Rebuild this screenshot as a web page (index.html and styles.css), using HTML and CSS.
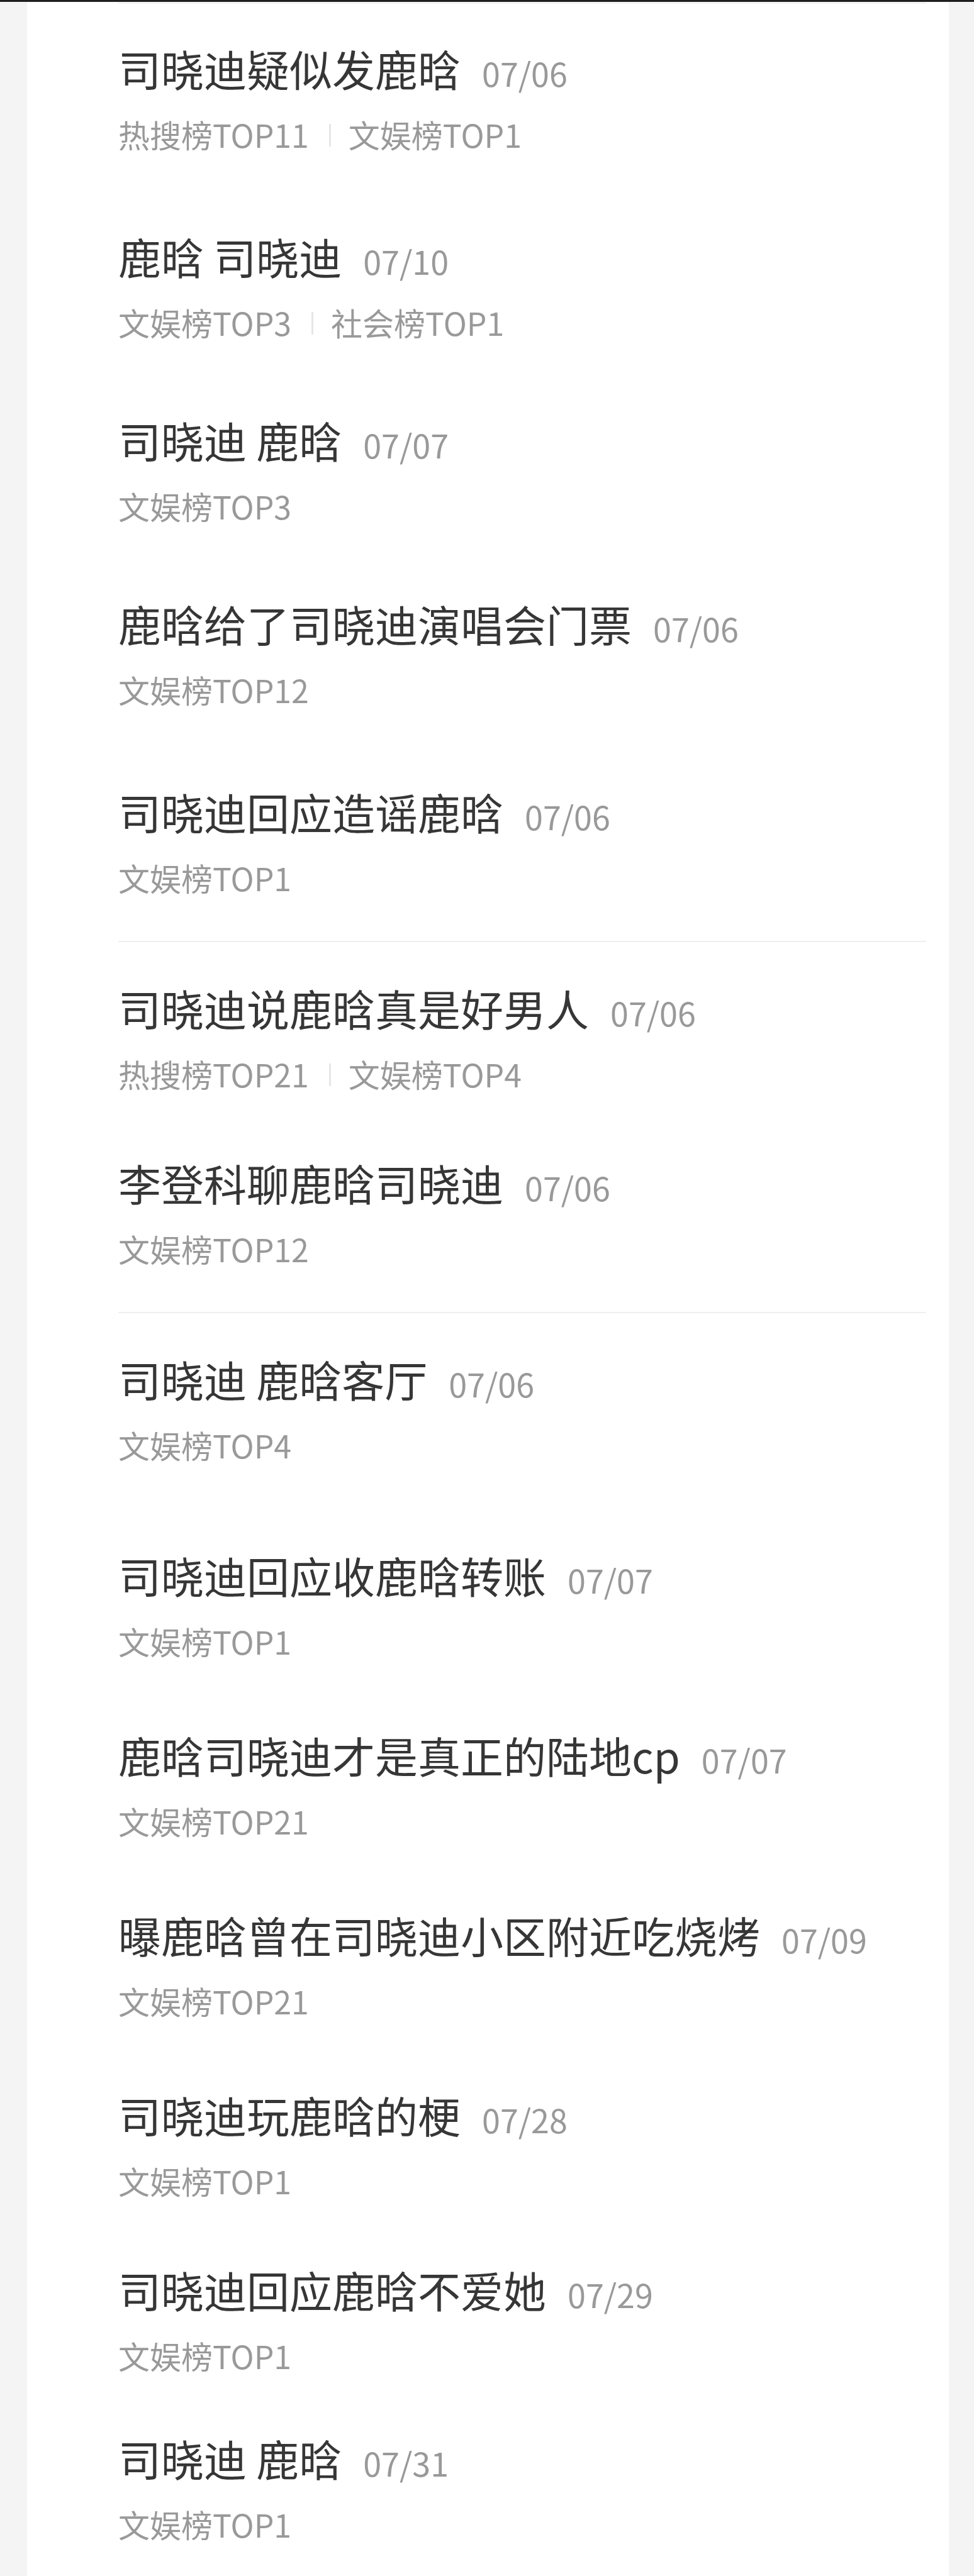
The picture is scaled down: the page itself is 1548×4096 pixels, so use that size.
FILE: index.html
```html
<!DOCTYPE html>
<html lang="zh-CN">
	<head>
		<meta charset="utf-8" />
		<title>热搜记录</title>
		<link rel="stylesheet" href="styles.css">
	</head>
	<body>
		<div class="topBar"></div>
		<div id="divList">
			<div class="rule first"></div>
			<div class="item roomy">
				<div class="title">司晓迪疑似发鹿晗<span class="date">07/06</span></div>
				<div class="tags"><span>热搜榜TOP11</span><i class="sep"></i><span>文娱榜TOP1</span></div>
			</div>
			<div class="item">
				<div class="title">鹿晗 司晓迪<span class="date">07/10</span></div>
				<div class="tags"><span>文娱榜TOP3</span><i class="sep"></i><span>社会榜TOP1</span></div>
			</div>
			<div class="item">
				<div class="title">司晓迪 鹿晗<span class="date">07/07</span></div>
				<div class="tags"><span>文娱榜TOP3</span></div>
			</div>
			<div class="item roomy">
				<div class="title">鹿晗给了司晓迪演唱会门票<span class="date">07/06</span></div>
				<div class="tags"><span>文娱榜TOP12</span></div>
			</div>
			<div class="item">
				<div class="title">司晓迪回应造谣鹿晗<span class="date">07/06</span></div>
				<div class="tags"><span>文娱榜TOP1</span></div>
			</div>
			<div class="rule"></div>
			<div class="item close">
				<div class="title">司晓迪说鹿晗真是好男人<span class="date">07/06</span></div>
				<div class="tags"><span>热搜榜TOP21</span><i class="sep"></i><span>文娱榜TOP4</span></div>
			</div>
			<div class="item">
				<div class="title">李登科聊鹿晗司晓迪<span class="date">07/06</span></div>
				<div class="tags"><span>文娱榜TOP12</span></div>
			</div>
			<div class="rule"></div>
			<div class="item airy">
				<div class="title">司晓迪 鹿晗客厅<span class="date">07/06</span></div>
				<div class="tags"><span>文娱榜TOP4</span></div>
			</div>
			<div class="item snug">
				<div class="title">司晓迪回应收鹿晗转账<span class="date">07/07</span></div>
				<div class="tags"><span>文娱榜TOP1</span></div>
			</div>
			<div class="item snug">
				<div class="title">鹿晗司晓迪才是真正的陆地cp<span class="date">07/07</span></div>
				<div class="tags"><span>文娱榜TOP21</span></div>
			</div>
			<div class="item snug">
				<div class="title">曝鹿晗曾在司晓迪小区附近吃烧烤<span class="date">07/09</span></div>
				<div class="tags"><span>文娱榜TOP21</span></div>
			</div>
			<div class="item close">
				<div class="title">司晓迪玩鹿晗的梗<span class="date">07/28</span></div>
				<div class="tags"><span>文娱榜TOP1</span></div>
			</div>
			<div class="item tight">
				<div class="title">司晓迪回应鹿晗不爱她<span class="date">07/29</span></div>
				<div class="tags"><span>文娱榜TOP1</span></div>
			</div>
			<div class="item">
				<div class="title">司晓迪 鹿晗<span class="date">07/31</span></div>
				<div class="tags"><span>文娱榜TOP1</span></div>
			</div>
		</div>
	</body>
</html>
```

FILE: styles.css
```css
body {
	margin: 0px;
	background: #f4f4f4;
	font-family: "Noto Sans CJK SC", "Noto Sans", sans-serif;
}
.topBar {
	height: 3px;
	background: #1e1e1e;
}
#divList {
	margin-left: 43px;
	width: 1465px;
	min-height: 4093px;
	box-sizing: border-box;
	padding: 0 36px 0 145px;
	background: #ffffff;
}
.rule {
	height: 2px;
	background: #efefef;
	margin: 12px 0 6px 0;
}
.rule.first {
	margin: 1px 0 4px 0;
	background: #f3f3f3;
}
.item {
	padding: 59px 0;
}
.item.roomy {
	padding-bottom: 66px;
}
.item.airy {
	padding-bottom: 79px;
}
.item.snug {
	padding-bottom: 53px;
}
.item.close {
	padding-bottom: 45px;
}
.item.tight {
	padding-bottom: 35px;
}
.title {
	font-size: 68px;
	line-height: 80px;
	height: 80px;
	color: #363636;
	font-weight: 400;
	white-space: nowrap;
}
.date {
	margin-left: 34px;
	font-size: 52px;
	line-height: 1;
	color: #999999;
}
.tags {
	margin-top: 34px;
	height: 60px;
	display: flex;
	align-items: center;
	font-size: 50px;
	line-height: 60px;
	color: #999999;
}
.sep {
	display: inline-block;
	width: 3px;
	height: 36px;
	margin: 4px 28px 0 32px;
	background: #e6e6e6;
}
```
